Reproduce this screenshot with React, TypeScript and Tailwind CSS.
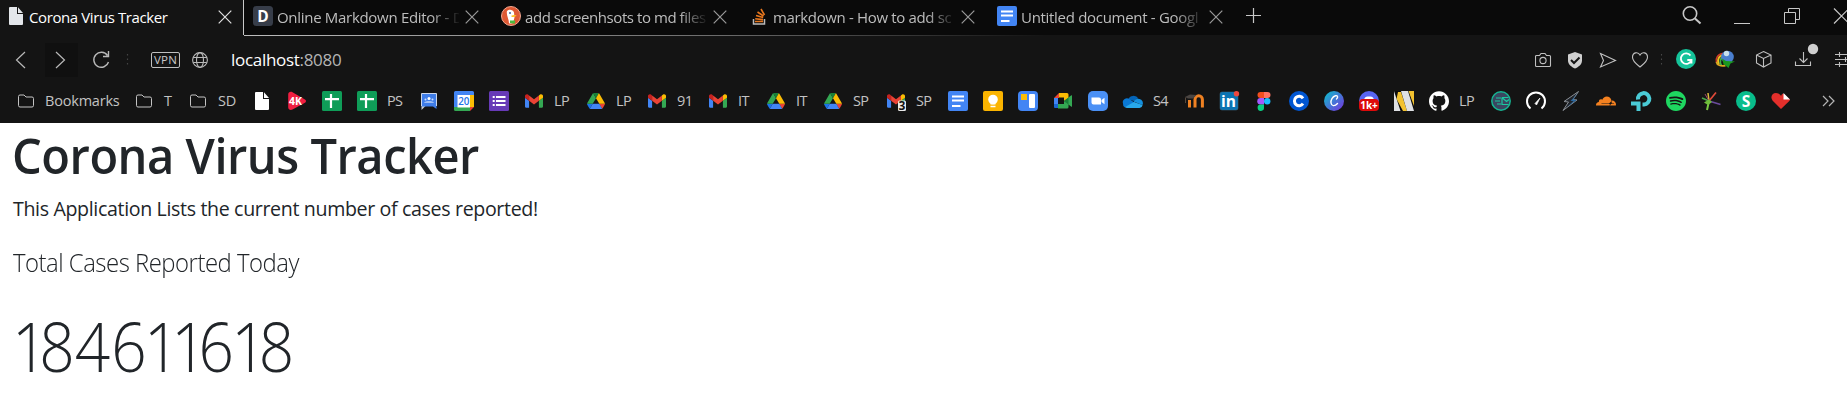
import React from "react";
import { SiGithub, SiSpotify, SiCloudflare } from "react-icons/si";

type Kids = { children?: React.ReactNode };
const FONT = "font-['Open_Sans','Noto_Sans',sans-serif]";

function Icon({ children }: Kids) {
  return (
    <svg width="20" height="20" viewBox="0 0 20 20" className="block shrink-0 overflow-visible" fill="none">
      {children}
    </svg>
  );
}

function Glyph({ x = 10, y, size, fill = "#fff", weight = 700, children }: Kids & { x?: number; y: number; size: number; fill?: string; weight?: number }) {
  return (
    <text x={x} y={y} fontSize={size} fill={fill} fontWeight={weight} textAnchor="middle" fontFamily="Open Sans, sans-serif">
      {children}
    </text>
  );
}

const Page = ({ fill = "#fff" }: { fill?: string }) => (
  <Icon>
    <path d="M4 1h7v7h6v10a1 1 0 0 1-1 1H4a1 1 0 0 1-1-1V2a1 1 0 0 1 1-1z" fill={fill} />
    <path d="M12 1.200 17 7h-5z" fill={fill} />
  </Icon>
);

const Folder = () => (
  <svg width="16" height="14" viewBox="0 0 16 14" className="block shrink-0" fill="none" stroke="#c4c4c4">
    <path d="M.5 11.500v-9a1.500 1.500 0 0 1 1.500-1.500h4l2 2h6a1.500 1.500 0 0 1 1.500 1.500v7a1.500 1.500 0 0 1-1.500 1.500H2A1.500 1.500 0 0 1 .5 11.500z" />
  </svg>
);

const FourK = () => (
  <Icon>
    <path d="M1.200 3.500C1.200 1 3.500.2 5.500 1.200l12 7c2 1 2 2.700 0 3.800l-12 6.500c-2 1-4.300 0-4.300-2.300z" fill="#f01e41" />
    <Glyph x={8.500} y={14} size={10.500}>4K</Glyph>
  </Icon>
);

const Sheets = () => (
  <Icon>
    <rect width="20" height="20" rx="1.500" fill="#0f9d58" />
    <path d="M3 8.200h14M9 3v14" stroke="#fff" strokeWidth="2.200" />
  </Icon>
);

const Classroom = () => (
  <Icon>
    <path d="M2.500 15v4l4-4z" fill="#c9cdd2" />
    <path d="M2.500 2.500h15v15.500l-3.500-2.500H2.500z" fill="#3f7de8" />
    <path d="M2.500 15V2.500h15V15" stroke="#dfe8f7" strokeWidth=".9" />
    <circle cx="10" cy="7.500" r="1.500" fill="#fff" />
    <circle cx="6.500" cy="8.500" r="1" fill="#cfe0ff" />
    <circle cx="13.500" cy="8.500" r="1" fill="#cfe0ff" />
    <path d="M5 11.500c1-1.300 9-1.300 10 0z" fill="#fff" />
  </Icon>
);

const Calendar = () => (
  <Icon>
    <path d="M1.500 0h17A1.500 1.500 0 0 1 20 1.500V4H0V1.500A1.500 1.500 0 0 1 1.500 0z" fill="#4285f4" />
    <path d="M0 3h4v13H0z" fill="#4285f4" />
    <path d="M16 4h4v12h-4z" fill="#fbbc04" />
    <path d="M0 16h16v4H1.500A1.500 1.500 0 0 1 0 18.500z" fill="#34a853" />
    <path d="M16 16h4l-4 4z" fill="#ea4335" />
    <path d="M3.500 4H16v12.500H3.500z" fill="#fff" />
    <Glyph x={9.800} y={13.800} size={9.800} fill="#1a73e8" weight={600}>20</Glyph>
  </Icon>
);

const Forms = () => (
  <Icon>
    <rect width="20" height="20" rx="1.500" fill="#673ab7" />
    <path d="M7 6h9.500M7 10h9.500M7 14h9.500" stroke="#fff" strokeWidth="2" />
    <path d="M3.700 6h2M3.700 10h2M3.700 14h2" stroke="#fff" strokeWidth="2" />
  </Icon>
);

const GmailMark = () => (
  <svg x="1" y="3" width="18" height="14" viewBox="52 42 88 66">
    <path fill="#4285f4" d="M58 108h14V74L52 59v43c0 3.320 2.690 6 6 6" />
    <path fill="#34a853" d="M120 108h14c3.320 0 6-2.690 6-6V59l-20 15" />
    <path fill="#fbbc04" d="M120 48v26l20-15v-8c0-7.420-8.470-11.650-14.400-7.200" />
    <path fill="#ea4335" d="M72 74V48l24 18 24-18v26L96 92" />
    <path fill="#c5221f" d="M52 51v8l20 15V48l-5.600-4.200c-5.940-4.450-14.400-.22-14.400 7.200" />
  </svg>
);
const Gmail = () => <Icon><GmailMark /></Icon>;
const GmailCount = () => (
  <Icon>
    <GmailMark />
    <rect x="12" y="9.500" width="8" height="10.500" rx="1.500" fill="#e9e9e9" />
    <Glyph x={16} y={19} size={12} fill="#111">3</Glyph>
  </Icon>
);

const Drive = () => (
  <Icon>
    <svg x="1" y="2" width="18" height="16" viewBox="0 0 87.3 78">
      <path fill="#1a73e8" d="m6.600 66.850 3.850 6.650c.8 1.400 1.950 2.500 3.300 3.300L27.500 53H0c0 1.550.4 3.100 1.200 4.500z" />
      <path fill="#34a853" d="M43.650 25 29.900 1.200c-1.350.8-2.500 1.900-3.300 3.300l-25.400 44A9.060 9.060 0 0 0 0 53h27.500z" />
      <path fill="#ea4335" d="M73.550 76.800c1.350-.8 2.500-1.900 3.300-3.300l1.600-2.750L86.100 57.500c.8-1.400 1.200-2.950 1.200-4.500H59.800l5.850 11.500z" />
      <path fill="#188038" d="M43.650 25 57.400 1.200C56.050.4 54.500 0 52.900 0H34.400c-1.600 0-3.150.45-4.500 1.200z" />
      <path fill="#4285f4" d="M59.800 53H27.500L13.750 76.800c1.350.8 2.900 1.200 4.500 1.200h50.800c1.600 0 3.150-.45 4.500-1.200z" />
      <path fill="#fbbc04" d="m73.400 26.500-12.700-22c-.8-1.400-1.950-2.500-3.300-3.300L43.650 25 59.800 53h27.450c0-1.550-.4-3.100-1.200-4.500z" />
    </svg>
  </Icon>
);

const Docs = () => (
  <Icon>
    <rect width="20" height="20" rx="2" fill="#4285f4" />
    <path d="M4 5.500h12M4 9.500h12M4 15h8.500" stroke="#fff" strokeWidth="2" />
  </Icon>
);

const Keep = () => (
  <Icon>
    <rect width="20" height="20" rx="2" fill="#fbb400" />
    <circle cx="10" cy="8.500" r="4.800" fill="#fff" />
    <path d="M7.500 11h5v2.500h-5zM7.500 14.700h5v1.500h-5z" fill="#fff" />
  </Icon>
);

const Jamboard = () => (
  <Icon>
    <rect width="20" height="20" rx="4" fill="#4285f4" />
    <rect x="3" y="3" width="6" height="6" fill="#fbbc04" />
    <rect x="11" y="3" width="6" height="14" rx="1" fill="#fff" />
  </Icon>
);

const Meet = () => (
  <Icon>
    <path d="M1 7 6 2v5z" fill="#ea4335" />
    <path d="M1 7h4v6H1z" fill="#4285f4" />
    <path d="M1 13h4v4H2a1 1 0 0 1-1-1z" fill="#1967d2" />
    <path d="M6 2h8a1.500 1.500 0 0 1 1.500 1.500v3.500L11 10V6.500H6z" fill="#fbbc04" />
    <path d="M5 13h6v-3l4.500 3v3a1.500 1.500 0 0 1-1.500 1.500H5z" fill="#34a853" />
    <path d="m11 10 7-5.500c.6-.5 1-.2 1 .3v10.500c0 .5-.4.700-1 .3z" fill="#34a853" />
    <path d="m11 10 4.500-3.500v7z" fill="#188038" />
  </Icon>
);

const Zoom = () => (
  <Icon>
    <rect width="20" height="20" rx="5" fill="#4a90f5" />
    <path d="M3.500 6.500h7.500a2 2 0 0 1 2 2v5H5.500a2 2 0 0 1-2-2zM13.500 9l3-2.300v6.600l-3-2.300z" fill="#fff" />
  </Icon>
);

const OneDrive = () => (
  <Icon>
    <path d="M5 8.500a6 6 0 0 1 10.500-1c-2 0-3 1-4.500 2.500z" fill="#0364b8" />
    <path d="M0 12.500a4 4 0 0 1 6.500-4.200L12 12 2 16.500a4 4 0 0 1-2-4z" fill="#0a78d4" />
    <path d="M10.500 10.500a5 5 0 0 1 6-2.500 4.200 4.200 0 0 1 3 6z" fill="#1490df" />
    <path d="M2 16 11 11l8.600 3a3.500 3.500 0 0 1-3 3H4a4 4 0 0 1-2-1z" fill="#28a8ea" />
  </Icon>
);

const Moodle = () => (
  <Icon>
    <path d="M5.500 16.500V9" stroke="#ef8122" strokeWidth="3" />
    <path d="M11 16.500V8.500a3.700 3.700 0 0 1 7.400 0v8" stroke="#ef8122" strokeWidth="3" />
    <path d="m1 6 5-2.500 6.500.5L9 7.500H4z" fill="#4a4542" />
    <path d="M1.500 6.500V12" stroke="#5a4a3c" />
  </Icon>
);

const LinkedIn = () => (
  <Icon>
    <rect x="1" y="1" width="18" height="18" rx="2" fill="#0a74b3" stroke="#3b6f8f" strokeWidth=".5" />
    <Glyph x={9.500} y={16} size={15.500}>in</Glyph>
    <circle cx="17.500" cy="2.700" r="2.700" fill="#f0483e" />
  </Icon>
);

const Figma = () => (
  <Icon>
    <path d="M10 1H6.500a3 3 0 0 0 0 6H10z" fill="#f24e1e" />
    <path d="M10 1h3.500a3 3 0 0 1 0 6H10z" fill="#ff7262" />
    <path d="M10 7H6.500a3 3 0 0 0 0 6.500H10z" fill="#a259ff" />
    <circle cx="13.200" cy="10.200" r="3.200" fill="#1abcfe" />
    <path d="M10 13.500H6.500a3.200 3.200 0 1 0 3.500 3z" fill="#0acf83" />
  </Icon>
);

const Coursera = () => (
  <Icon>
    <circle cx="10" cy="10" r="10" fill="#0056d2" />
    <path d="M14 7.300a4.700 4.700 0 1 0 0 5.400" stroke="#fff" strokeWidth="3" />
  </Icon>
);

const Canva = () => (
  <Icon>
    <defs>
      <linearGradient id="canva" x1="0" y1="0" x2="1" y2="1">
        <stop offset=".1" stopColor="#14b5cd" />
        <stop offset="1" stopColor="#7a2ee0" />
      </linearGradient>
    </defs>
    <circle cx="10" cy="10" r="10" fill="url(#canva)" />
    <path d="M12.500 8c2-1.500 1-3.800-1-3.300C8.500 5.500 6.500 9 7 12c.5 3 3.500 3.800 6.500.5" stroke="#fff" strokeWidth="1.400" strokeLinecap="round" />
  </Icon>
);

const Discord = () => (
  <Icon>
    <circle cx="10" cy="10" r="10" fill="#5865f2" />
    <path d="M5 9c.5-3 2-3.500 3.500-3.500h3C13 5.500 14.500 6 15 9z" fill="#fff" />
    <rect y="8" width="20" height="12" rx="4" fill="#dd0a0a" />
    <Glyph y={17.600} size={10}>1k+</Glyph>
  </Icon>
);

const Wave = () => (
  <Icon>
    <rect width="20" height="20" fill="#0c0c0c" />
    <path d="M4 1h3l6 19H9L2.500 8zM14.500 0H20v15z" fill="#f2c230" />
    <path d="M0 0v20h6.500zM7 0h7l6 20h-7z" fill="#dfe1e4" />
  </Icon>
);

const MailSpeed = () => (
  <Icon>
    <circle cx="10" cy="10" r="9.200" fill="#3a4660" stroke="#16b592" strokeWidth="1.500" />
    <path d="M5 7h5M4 10h5M6 13h4M11 6.500h6.500M11 6.500v7h6.500M11.500 7l4 3.500 2.500-2" stroke="#1bc9a0" strokeWidth="1.200" />
  </Icon>
);

const Gauge = () => (
  <Icon>
    <path d="M4.500 17.500a9 9 0 1 1 11 0" stroke="#fff" strokeWidth="2" />
    <path d="m9 12.500 5-5.500-3.500 7z" fill="#fff" stroke="#fff" strokeWidth=".7" />
  </Icon>
);

const Bolt = () => (
  <Icon>
    <path d="M17.500.5 3 10.500l4.500.5L2 19.500 16 9l-4-.5z" fill="#20242a" stroke="#8a8f96" strokeWidth="1" />
    <path d="m17.500 1.500-8 8.500h3L6 16l9.500-7-3.500-.5z" fill="#27679f" />
  </Icon>
);

const TpLink = () => (
  <Icon>
    <path d="M0 10.500h9.500V20H5.500v-5.500H0z" fill="#4acbd6" />
    <path d="M7 8.500a5.700 5.700 0 1 1 6 5h-1.500" stroke="#4acbd6" strokeWidth="4" />
  </Icon>
);

const Burst = () => (
  <Icon>
    <path d="M8 10 6 19" stroke="#7ac943" strokeWidth="2" />
    <path d="m8 10-7-3" stroke="#4aa84a" strokeWidth="1.500" />
    <path d="M8 10 7 2" stroke="#e0b83c" strokeWidth="1.500" />
    <path d="m8 10-4-7" stroke="#9c4a6a" />
    <path d="m8 10 7-8.500" stroke="#e04a3a" strokeWidth="1.700" />
    <path d="m8 10 11.500 3.500" stroke="#6a4a9c" strokeWidth="1.700" />
    <path d="m3 11.500 5-3 3 2.500-4 3z" fill="#6fbe3a" />
  </Icon>
);

const Sketch = () => (
  <Icon>
    <circle cx="10" cy="10" r="10" fill="#08bd8b" />
    <Glyph y={15.600} size={15.500}>S</Glyph>
  </Icon>
);

const HeartDoc = () => (
  <Icon>
    <path d="M10 18 1.500 9.500C-1 6 1 2 5 2c2.500 0 4 1.500 5 3 .5-1 1-2 2-2.500L19 8.500c0 .5-.3 1-.7 1.500z" fill="#e32f2b" />
    <path d="M12.500 2 19 8.500h-6.500z" fill="#fff" />
  </Icon>
);

const Duck = () => (
  <Icon>
    <circle cx="10" cy="10" r="9.500" fill="#de5833" stroke="#f3a58e" />
    <path d="M6 5c2-2 6-1.500 7 1.500l.5 5-1.500 5.500c-1.500.7-3 .7-4 .3C8 13 5 9 6 5z" fill="#fff" />
    <path d="M10.500 9.500c2-1 4.500-.5 5 0-.5 1-3 1.500-5 1.500z" fill="#fdc226" />
    <path d="M9 14.500h5v3c-2 0-4 0-5-.5z" fill="#4cba3c" />
    <circle cx="9" cy="7" r=".9" fill="#2d4f8e" />
  </Icon>
);

const DIcon = () => (
  <Icon>
    <rect width="20" height="20" rx="3.500" fill="#373d49" />
    <Glyph y={15.500} size={15.500}>D</Glyph>
  </Icon>
);

const Overflow = () => (
  <Icon>
    <path d="M4.500 13v5h11v-5" stroke="#bcbbbb" strokeWidth="1.500" />
    <path d="M6 15.500h8M6.200 12.700l7.800.9M7 9.500l7.200 2.100M8.500 6l6 4M12 3l3.500 6" stroke="#e8771e" strokeWidth="1.600" />
  </Icon>
);

const Cross = ({ color = "#b4b4b4" }: { color?: string }) => (
  <svg width="14" height="14" viewBox="0 0 14 14" className="block shrink-0" stroke={color} strokeWidth="1.200">
    <path d="m.7.7 12.600 12.600M13.300.7.7 13.300" />
  </svg>
);

type TabProps = { icon: React.ReactNode; title: string; spacing: string };

function Tab({ icon, title, spacing }: TabProps) {
  return (
    <div className="flex h-[34px] w-[248px] shrink-0 items-center pl-[8px]">
      <div className="-mt-[2px]">{icon}</div>
      <div className={`ml-[4px] h-[22px] w-[182px] shrink-0 whitespace-nowrap text-[15px] leading-[22px] text-[#bdbdbd] mask-r-from-[154px] mask-r-to-[184px] ${spacing}`}>
        {title}
      </div>
      <div className="ml-[6px] shrink-0"><Cross color="#9a9a9a" /></div>
    </div>
  );
}

type Mark = { icon: React.ReactNode; label?: string; w: string };
const P = "w-[35px]";
const marks: Mark[] = [
  { icon: <Page />, w: P },
  { icon: <FourK />, w: P },
  { icon: <Sheets />, w: P },
  { icon: <Sheets />, label: "PS", w: "w-[62px]" },
  { icon: <Classroom />, w: P },
  { icon: <Calendar />, w: P },
  { icon: <Forms />, w: P },
  { icon: <Gmail />, label: "LP", w: "w-[62px]" },
  { icon: <Drive />, label: "LP", w: "w-[61px]" },
  { icon: <Gmail />, label: "91", w: "w-[61px]" },
  { icon: <Gmail />, label: "IT", w: "w-[58px]" },
  { icon: <Drive />, label: "IT", w: "w-[57px]" },
  { icon: <Drive />, label: "SP", w: "w-[63px]" },
  { icon: <GmailCount />, label: "SP", w: "w-[62px]" },
  { icon: <Docs />, w: P },
  { icon: <Keep />, w: P },
  { icon: <Jamboard />, w: P },
  { icon: <Meet />, w: P },
  { icon: <Zoom />, w: P },
  { icon: <OneDrive />, label: "S4", w: "w-[61px]" },
  { icon: <Moodle />, w: P },
  { icon: <LinkedIn />, w: P },
  { icon: <Figma />, w: P },
  { icon: <Coursera />, w: P },
  { icon: <Canva />, w: P },
  { icon: <Discord />, w: P },
  { icon: <Wave />, w: P },
  { icon: <SiGithub size={20} color="#fff" className="shrink-0" />, label: "LP", w: "w-[62px]" },
  { icon: <MailSpeed />, w: P },
  { icon: <Gauge />, w: P },
  { icon: <Bolt />, w: P },
  { icon: <SiCloudflare size={20} color="#f48120" className="shrink-0" />, w: P },
  { icon: <TpLink />, w: P },
  { icon: <SiSpotify size={20} color="#1ed760" className="shrink-0" />, w: P },
  { icon: <Burst />, w: P },
  { icon: <Sketch />, w: P },
  { icon: <HeartDoc />, w: P },
];

const LABEL = "whitespace-nowrap text-[14.5px] leading-[20px] text-[#c3c3c3]";

const digitSpacing: Record<string, string> = {
  "1": "tracking-[-9px]",
  "8": "tracking-[0px]",
  "4": "tracking-[1px]",
  "6": "tracking-[-3px]",
};

export default function App() {
  return (
    <div className={`h-[413px] w-[1847px] overflow-hidden bg-white ${FONT}`}>
      <header className="flex h-[123px] flex-col bg-[#141414]">
        <div className="flex h-9 shrink-0">
          <div className="flex w-[243px] shrink-0 items-center pb-[2px] pl-[6px]">
            <div className="-mt-[2px]"><Page fill="#e3e6ea" /></div>
            <div className="ml-[3px] w-[189px] whitespace-nowrap text-[15px] leading-[22px] tracking-[-0.4px] text-white">
              Corona Virus Tracker
            </div>
            <Cross color="#e0e0e0" />
          </div>
          <div className="h-[35px] w-px shrink-0 bg-[#c8c8c8]" />
          <div className="flex flex-1 flex-col">
            <div className="flex h-[35px] bg-[#0a0a0a] pl-px">
              <Tab icon={<DIcon />} title="Online Markdown Editor - D" spacing="tracking-[-0.3px]" />
              <Tab icon={<Duck />} title="add screenhsots to md files" spacing="tracking-[-0.43px]" />
              <Tab icon={<Overflow />} title="markdown - How to add sc" spacing="tracking-[-0.35px]" />
              <Tab icon={<Docs />} title="Untitled document - Googl" spacing="tracking-[-0.3px]" />
              <svg width="610" height="35" viewBox="0 0 610 35" className="block shrink-0" fill="none" stroke="#c8c8c8">
                <path d="M9 15.500h15M16.500 8v15" strokeWidth="1.200" />
                <circle cx="453" cy="13.500" r="6.700" strokeWidth="1.600" />
                <path d="m458 18.500 5.500 5" strokeWidth="2" />
                <path d="M497 23.500h16" />
                <path d="M547.500 12.500h11v11h-11zM551.500 12V8.500h11v11H559" />
                <path d="m597 8.500 15 15M597 23.500l15-15" strokeWidth="1.200" />
              </svg>
            </div>
            <div className="h-px bg-linear-to-r from-[#bdbdbd] from-[0%] via-[#6a6a6a] via-[30%] to-[#141414] to-[50%]" />
          </div>
        </div>

        <div className="flex h-[47px] shrink-0 items-center">
          <svg width="144" height="34" viewBox="0 0 144 34" className="mt-[1px] block shrink-0" fill="none" stroke="#b9b9b9" strokeWidth="1.200">
            <rect x="45" width="33" height="34" fill="#101010" stroke="none" />
            <path d="m25 9-8.500 8L25 25M56 9l8.500 8L56 25" />
            <path d="M107.500 12.500A7.500 7.500 0 1 0 108.500 19M108.500 8v5.500H103" strokeWidth="1.400" />
            <path d="M127.500 11v12" stroke="#444" strokeDasharray="1.500 3" />
          </svg>
          <div className="ml-[7px] mt-[1px] flex h-4 w-[29px] shrink-0 items-center justify-center rounded-[2px] border border-[#c0c0c0] text-[11.500px] tracking-[0.2px] text-[#c8c8c8]">
            VPN
          </div>
          <svg width="16" height="16" viewBox="0 0 16 16" className="ml-3 mt-[1px] block shrink-0" fill="none" stroke="#b9b9b9" strokeWidth="1.100">
            <circle cx="8" cy="8" r="7.400" />
            <ellipse cx="8" cy="8" rx="3.500" ry="7.400" />
            <path d="M1.200 5.500h13.600M1.200 10.500h13.600" />
          </svg>
          <div className="ml-[23px] w-[1304px] shrink-0 whitespace-nowrap text-[17px] tracking-[-0.3px] leading-6 text-white">
            localhost<span className="text-[#b5b5b5]">:8080</span>
          </div>
          <svg width="312" height="34" viewBox="1535 43 312 34" className="block shrink-0" fill="none" stroke="#c0c0c0" strokeWidth="1.100">
            <path d="M1536.500 55.500h3l1.500-2h4l1.500 2h3a1 1 0 0 1 1 1v9a1 1 0 0 1-1 1h-13a1 1 0 0 1-1-1v-9a1 1 0 0 1 1-1z" />
            <circle cx="1543" cy="60.500" r="3.100" />
            <path d="m1575 52 7 2.500v6c0 4-3.500 6.500-7 8-3.500-1.500-7-4-7-8v-6z" fill="#cfcfcf" stroke="none" />
            <path d="m1571 60 3 3 5.500-5.500" stroke="#141414" strokeWidth="2" />
            <path d="m1600.500 53.500 15 7-15 6.500 3-6.500z" />
            <path d="M1640 67c-3-2.500-7.500-5.500-7.500-9.700 0-5 5.500-6 7.500-2.200 2-3.800 7.500-2.800 7.500 2.200 0 4.200-4.500 7.200-7.500 9.700z" />
            <path d="M1661.500 54v13" stroke="#484848" strokeDasharray="1.500 3" />
            <circle cx="1686" cy="59" r="10" fill="#15c39a" stroke="none" />
            <path d="M1690.500 55.500a5.300 5.300 0 1 0 .8 4.500h-4M1691.500 59.500v4" stroke="#fff" strokeWidth="1.800" />
            <path d="M1723 53.500c-5 .3-8 5-6.500 9" stroke="#d23a2a" strokeWidth="1.600" />
            <path d="M1723.500 55c-4.500.5-7 5-4.500 9.500" stroke="#f0c021" strokeWidth="1.800" />
            <path d="M1724 57c-3.500.5-5 4.500-2.500 8.500" stroke="#3fae49" strokeWidth="1.800" />
            <path d="M1716.500 62c.5 3 4 4.500 9 3.500" stroke="#d8a71f" strokeWidth="1.800" />
            <circle cx="1727.500" cy="57" r="6.300" fill="#4a7fd0" stroke="none" />
            <circle cx="1726.500" cy="53.500" r="2.700" fill="#c9e2ee" stroke="none" />
            <path d="m1722 58.500 4 2.500 9 .5-4.500 2-2 4.500-5-4z" fill="#1a9a1f" stroke="none" />
            <path d="m1763.500 51.500 7.500 3.500v8l-7.500 4-7-4v-8zM1756.500 55l7 3.500 7.500-3.500M1763.500 58.500V67" />
            <path d="M1795.500 61.500v4h15v-4M1803.500 52v10M1799.500 58.500l4 4 4-4" />
            <circle cx="1813" cy="49" r="5.200" fill="#cfcfcf" stroke="none" />
            <path d="M1835 54.500h12M1835 59.500h12M1835 64.500h12M1839.500 52v5M1845.500 57v5M1839.500 62v5" />
          </svg>
        </div>

        <div className="flex h-[36px] shrink-0 items-center pl-[18px]">
          <div className="flex w-[118px] shrink-0 items-center"><Folder /><span className={`${LABEL} ml-[11px] tracking-[-0.2px]`}>Bookmarks</span></div>
          <div className="flex w-[54px] shrink-0 items-center"><Folder /><span className={`${LABEL} ml-[12px]`}>T</span></div>
          <div className="flex w-[62px] shrink-0 items-center"><Folder /><span className={`${LABEL} ml-[12px] tracking-[-0.3px]`}>SD</span></div>
          {marks.map((m, i) => (
            <div key={i} className={`flex shrink-0 items-center ${m.w}`}>
              {m.icon}
              {m.label && <span className={`${LABEL} ml-[10px] tracking-[-0.6px]`}>{m.label}</span>}
            </div>
          ))}
          <svg width="14" height="12" viewBox="0 0 14 12" className="ml-[16px] block shrink-0" fill="none" stroke="#b5b5b5" strokeWidth="1.200">
            <path d="m1 1 5 5-5 5M7 1l5 5-5 5" />
          </svg>
        </div>
      </header>

      <main className="pl-[12px] text-[#212529]">
        <h1 className="mt-[2px] h-[60px] origin-left scale-x-[0.96] whitespace-nowrap text-[49px] font-semibold leading-[60px] tracking-[-0.5px]">Corona Virus Tracker</h1>
        <p className="mt-[9px] h-[30px] whitespace-nowrap pl-px text-[19.6px] leading-[30px] tracking-[-0.35px]">This Application Lists the current number of cases reported!</p>
        <p className="mt-[20px] h-[36px] origin-left scale-x-[0.955] whitespace-nowrap pl-px text-[25px] font-light leading-[36px] tracking-[-0.5px]">Total Cases Reported Today</p>
        <p className="mt-[23px] h-[84px] origin-left scale-x-[0.9] whitespace-nowrap text-[69px] font-light leading-[84px]">
          {"184611618".split("").map((d, i) => (
            <span key={i} className={digitSpacing[d]}>{d}</span>
          ))}
        </p>
      </main>
    </div>
  );
}
